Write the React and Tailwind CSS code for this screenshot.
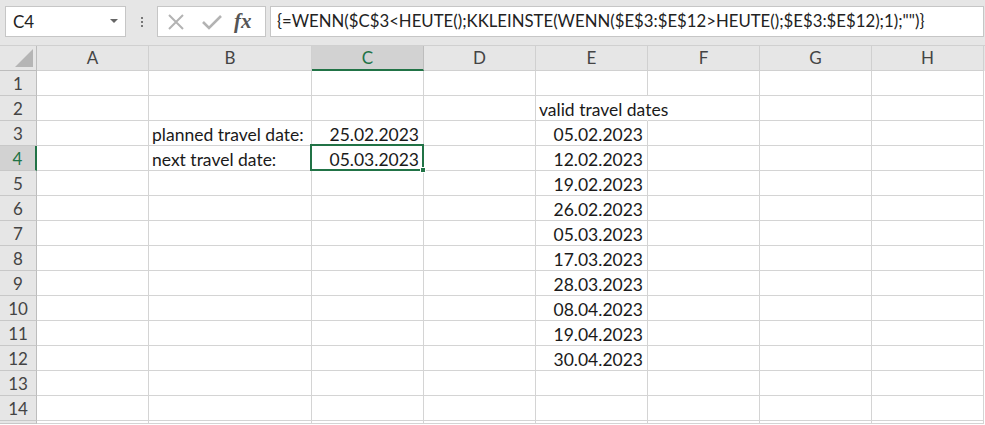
import React from "react";

const cols = [
  { name: "A", w: "w-[112px]" },
  { name: "B", w: "w-[163px]" },
  { name: "C", w: "w-[112px]" },
  { name: "D", w: "w-[112px]" },
  { name: "E", w: "w-[112px]" },
  { name: "F", w: "w-[112px]" },
  { name: "G", w: "w-[112px]" },
  { name: "H", w: "w-[112px]" },
];

const dates = [
  "05.02.2023",
  "12.02.2023",
  "19.02.2023",
  "26.02.2023",
  "05.03.2023",
  "17.03.2023",
  "28.03.2023",
  "08.04.2023",
  "19.04.2023",
  "30.04.2023",
];

function cellContent(row, col) {
  if (row === 2 && col === "E") return { text: "valid travel dates", align: "left" };
  if (row === 3 && col === "B") return { text: "planned travel date:", align: "left" };
  if (row === 4 && col === "B") return { text: "next travel date:", align: "left" };
  if (row === 3 && col === "C") return { text: "25.02.2023", align: "right" };
  if (row === 4 && col === "C") return { text: "05.03.2023", align: "right" };
  if (col === "E" && row >= 3 && row <= 12) return { text: dates[row - 3], align: "right" };
  return null;
}

function FormulaBar() {
  return (
    <div className="h-[46px] bg-[#e6e6e6] flex items-start pt-[6px] pl-[5px] border-b border-[#d0d0d0]">
      <div className="w-[121px] h-[31px] bg-white border border-[#c6c6c6] flex items-center justify-between pl-[7px] pr-[7px]">
        <span className="text-[17px] text-[#222] leading-none">C4</span>
        <svg width="8" height="5" viewBox="0 0 8 5">
          <path d="M0 0 L8 0 L4 4 Z" fill="#666" />
        </svg>
      </div>
      <div className="w-[31px] h-[31px] flex flex-col items-center justify-center gap-[2px]">
        <span className="w-[2px] h-[2px] bg-[#777]" />
        <span className="w-[2px] h-[2px] bg-[#777]" />
        <span className="w-[2px] h-[2px] bg-[#777]" />
      </div>
      <div className="w-[109px] h-[31px] bg-white border border-[#c6c6c6] flex items-center">
        <svg className="ml-[9px]" width="18" height="18" viewBox="0 0 18 18">
          <path d="M2 2 L16 16 M16 2 L2 16" stroke="#b3b3b3" strokeWidth="2" />
        </svg>
        <svg className="ml-[17px]" width="20" height="16" viewBox="0 0 20 16">
          <path d="M1 8 L7 14 L19 2" stroke="#b3b3b3" strokeWidth="2.6" fill="none" />
        </svg>
        <span
          className="ml-[12px] text-[21px] italic font-bold text-[#555] leading-none"
          style={{ fontFamily: '"Liberation Serif", serif' }}
        >
          fx
        </span>
      </div>
      <div className="ml-[4px] flex-1 h-[31px] bg-white border border-[#c6c6c6] flex items-center pl-[6px] mr-[1px]">
        <span className="text-[16.75px] text-[#222] whitespace-nowrap leading-none">
          {'{=WENN($C$3<HEUTE();KKLEINSTE(WENN($E$3:$E$12>HEUTE();$E$3:$E$12);1);"")}'}
        </span>
      </div>
    </div>
  );
}

function HeaderRow() {
  return (
    <div className="flex h-[25px] bg-[#e6e6e6]">
      <div className="w-[37px] shrink-0 border-r border-b border-[#bdbdbd] relative">
        <svg className="absolute right-[3px] bottom-[3px]" width="18" height="18" viewBox="0 0 18 18">
          <path d="M18 0 L18 18 L0 18 Z" fill="#b5b5b5" />
        </svg>
      </div>
      {cols.map((c) => (
        <div
          key={c.name}
          className={`${c.w} shrink-0 flex items-center justify-center text-[17px] ${
            c.name === "C"
              ? "bg-[#d2d2d2] text-[#217346] border-b-2 border-b-[#217346] border-r border-r-[#bdbdbd]"
              : "text-[#444] border-r border-b border-[#d0d0d0]"
          }`}
        >
          {c.name}
        </div>
      ))}
    </div>
  );
}

function Row({ n, label = true, h = "h-[25px]" }) {
  const selected = n === 4;
  return (
    <div className={`flex ${h}`}>
      <div
        className={`w-[37px] shrink-0 flex items-center justify-center pt-[2px] text-[17px] border-b border-[#c8c8c8] ${
          selected
            ? "bg-[#d2d2d2] text-[#217346] border-r-2 border-r-[#217346]"
            : "bg-[#e6e6e6] text-[#444] border-r border-r-[#bdbdbd]"
        }`}
      >
        {label ? n : null}
      </div>
      {cols.map((c) => {
        const content = cellContent(n, c.name);
        const hideRight = n === 2 && c.name === "E";
        const isActive = selected && c.name === "C";
        return (
          <div
            key={c.name}
            className={`${c.w} shrink-0 relative border-b border-[#d4d4d4] ${
              hideRight ? "border-r border-r-white" : "border-r border-r-[#d4d4d4]"
            }`}
          >
            {content && (
              <div
                className={`absolute inset-y-0 flex items-center pt-[3px] leading-[20px] text-[17.5px] text-[#1a1a1a] whitespace-nowrap z-10 ${
                  content.align === "right" ? "right-[4px]" : "left-[3px]"
                }`}
              >
                {content.text}
              </div>
            )}
            {isActive && (
              <div className="absolute -left-[2px] -top-[2px] w-[114px] h-[27px] border-2 border-[#217346] z-20">
                <div className="absolute -right-[4px] -bottom-[4px] w-[6px] h-[6px] bg-[#217346] border border-white" />
              </div>
            )}
          </div>
        );
      })}
    </div>
  );
}

export default function App() {
  const rows = Array.from({ length: 14 }, (_, i) => i + 1);
  return (
    <div
      className="w-[985px] h-[425px] overflow-hidden bg-white"
      style={{ fontFamily: '"Lato", "Noto Sans", sans-serif' }}
    >
      <FormulaBar />
      <HeaderRow />
      {rows.map((n) => (
        <Row key={n} n={n} />
      ))}
      <Row n={15} label={false} h="h-[3px]" />
    </div>
  );
}
